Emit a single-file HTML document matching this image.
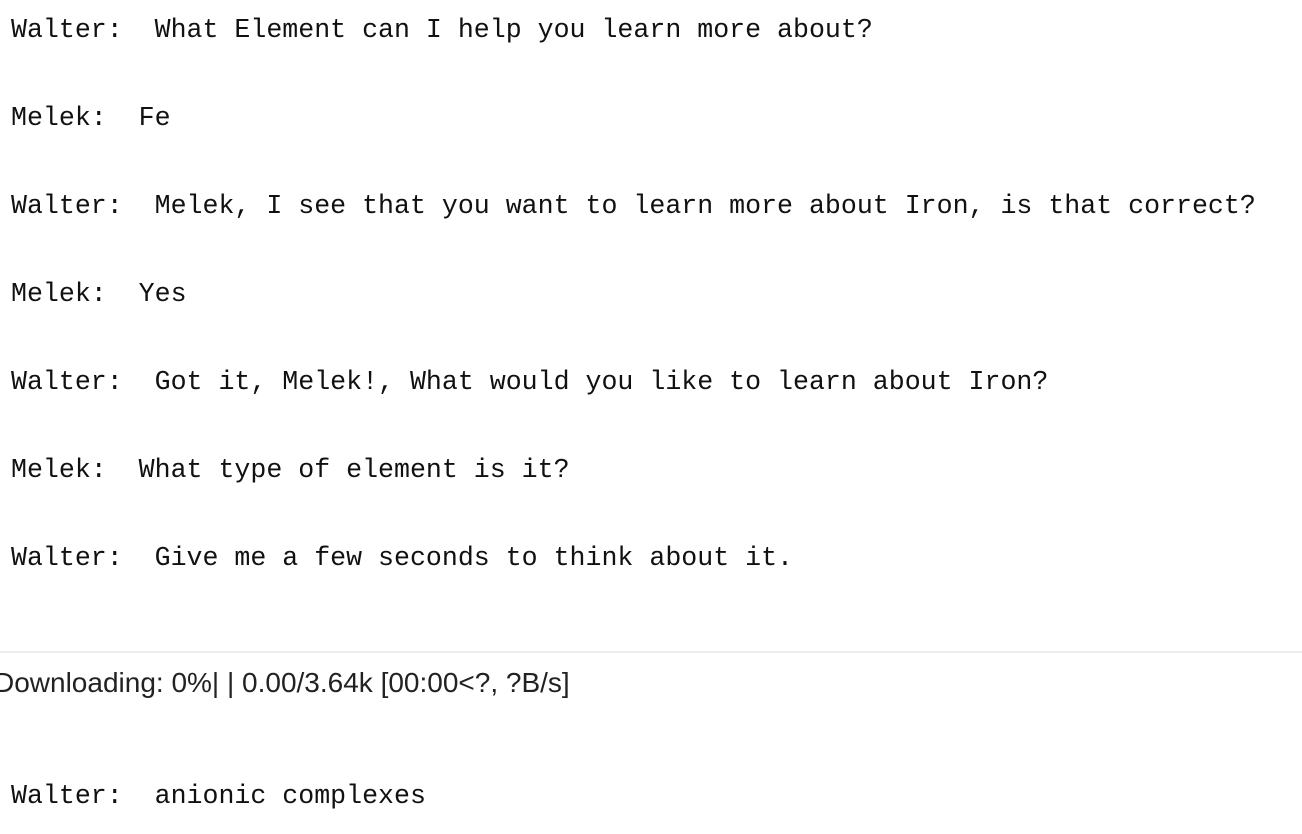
<!DOCTYPE html>
<html><head><style>
html,body{margin:0;padding:0;background:#fff;width:1302px;height:834px;overflow:hidden;position:relative}
.m{position:absolute;left:11px;font-family:"Liberation Mono",monospace;font-size:26.6px;line-height:32px;color:#111;white-space:pre}
.s{position:absolute;left:-6px;top:665px;font-family:"Liberation Sans",sans-serif;font-size:28px;line-height:36px;color:#222;white-space:pre}
.hr{position:absolute;left:0;top:651px;width:1302px;height:2px;background:#ededed}
</style></head><body>
<div class="m" style="top:14px">Walter:  What Element can I help you learn more about?</div>
<div class="m" style="top:102px">Melek:  Fe</div>
<div class="m" style="top:190px">Walter:  Melek, I see that you want to learn more about Iron, is that correct?</div>
<div class="m" style="top:278px">Melek:  Yes</div>
<div class="m" style="top:366px">Walter:  Got it, Melek!, What would you like to learn about Iron?</div>
<div class="m" style="top:454px">Melek:  What type of element is it?</div>
<div class="m" style="top:542px">Walter:  Give me a few seconds to think about it.</div>
<div class="hr"></div>
<div class="s">Downloading: 0%| | 0.00/3.64k [00:00&lt;?, ?B/s]</div>
<div class="m" style="top:780px">Walter:  anionic complexes</div>
</body></html>
